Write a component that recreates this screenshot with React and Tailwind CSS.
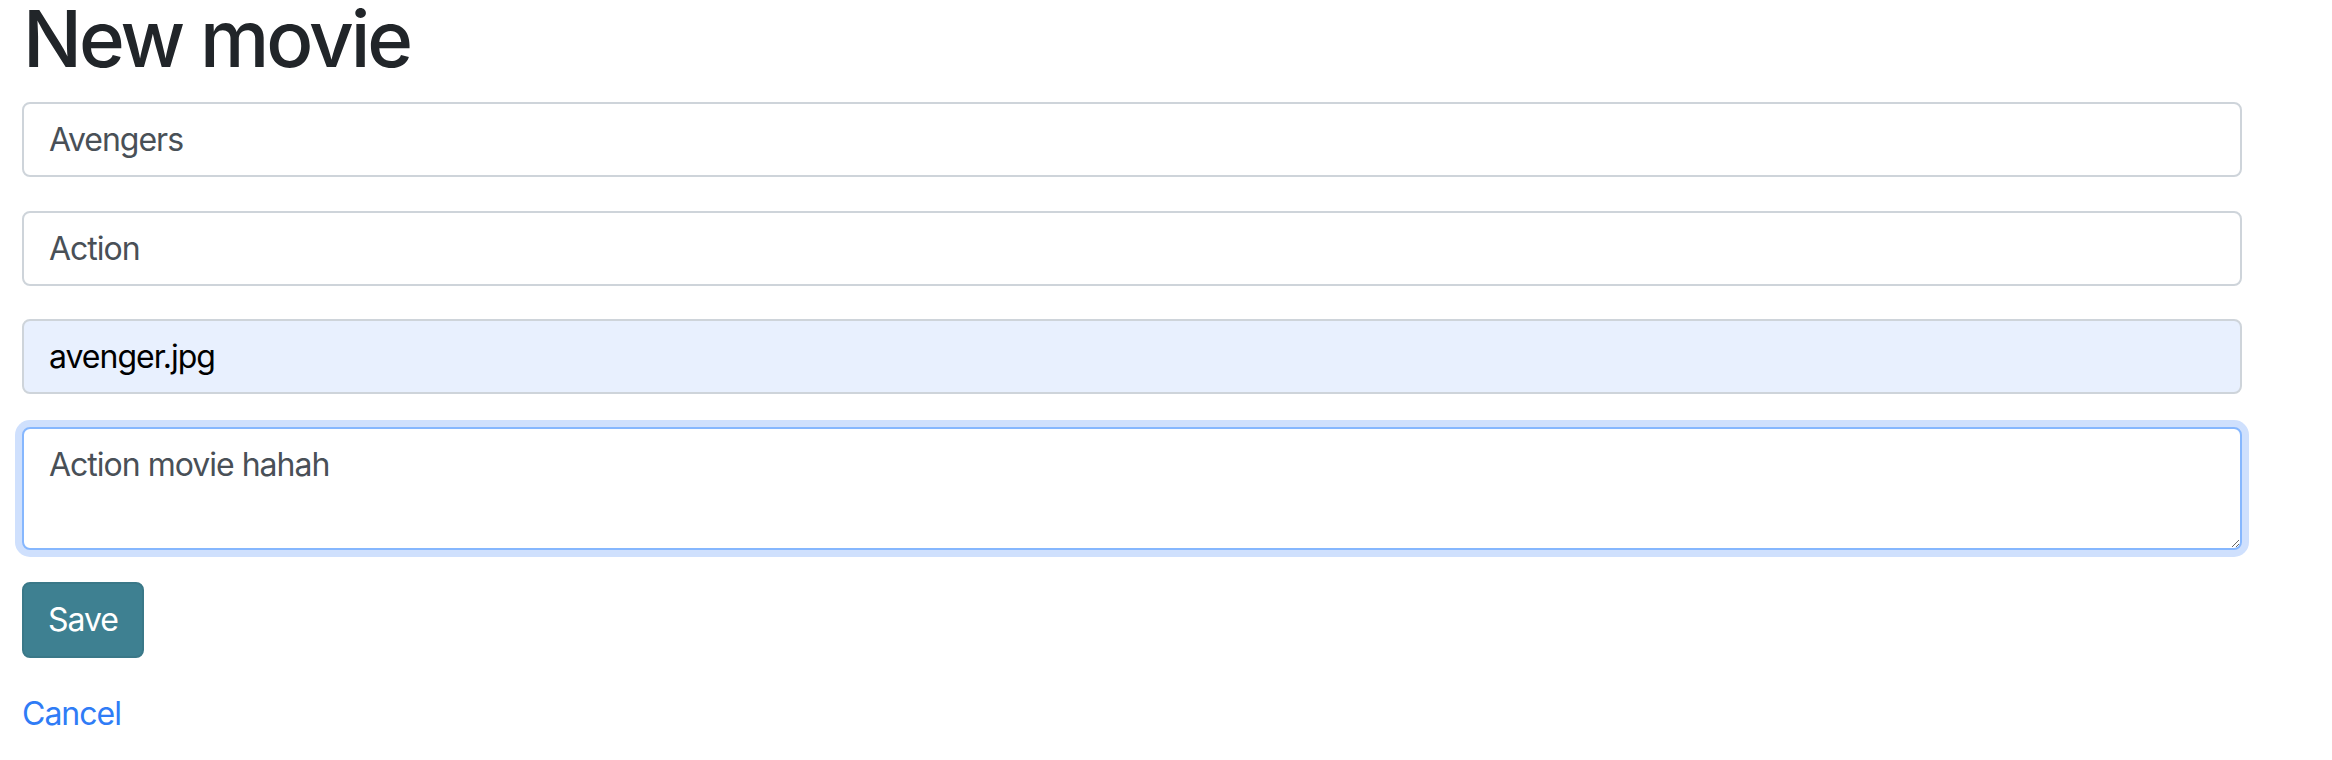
export default function App() {
  const font = { fontFamily: 'Inter, "Liberation Sans", sans-serif' };
  return (
    <div className="bg-white w-[2332px] h-[760px] overflow-hidden" style={font}>
      <div className="ml-[22px] w-[2220px] flex flex-col">
        <h1 className="text-[78px] leading-[78px] font-medium text-[#212529] ml-[1px] tracking-[-3px]">New movie</h1>
        <input
          readOnly
          value="Avengers"
          className="mt-[24px] h-[75px] w-full rounded-[8px] border-2 border-[#ced4da] bg-white px-[25px] text-[32px] tracking-[-1px] text-[#495057] outline-none"
        />
        <input
          readOnly
          value="Action"
          className="mt-[34px] h-[75px] w-full rounded-[8px] border-2 border-[#ced4da] bg-white px-[25px] text-[32px] tracking-[-1px] text-[#495057] outline-none"
        />
        <input
          readOnly
          value="avenger.jpg"
          className="mt-[33px] h-[75px] w-full rounded-[8px] border-2 border-[#ced4da] bg-[#e8f0fe] px-[25px] text-[32px] tracking-[-1px] text-black outline-none"
        />
        <textarea
          readOnly
          value="Action movie hahah"
          className="mt-[33px] h-[123px] w-full rounded-[8px] border-2 border-[#86b7fe] bg-white px-[25px] py-[12px] text-[32px] tracking-[-1px] leading-[48px] text-[#495057] outline-none shadow-[0_0_0_7px_#cfe0fd]"
        />
        <div className="mt-[32px]">
          <button className="h-[76px] w-[122px] rounded-[8px] border-2 border-[#3a7888] bg-[#3e8091] text-[32px] tracking-[-1px] text-white">
            Save
          </button>
        </div>
        <div className="mt-[32px] leading-[48px]">
          <a href="#" className="text-[32px] tracking-[-1px] text-[#2f7cf6]">Cancel</a>
        </div>
      </div>
    </div>
  );
}
